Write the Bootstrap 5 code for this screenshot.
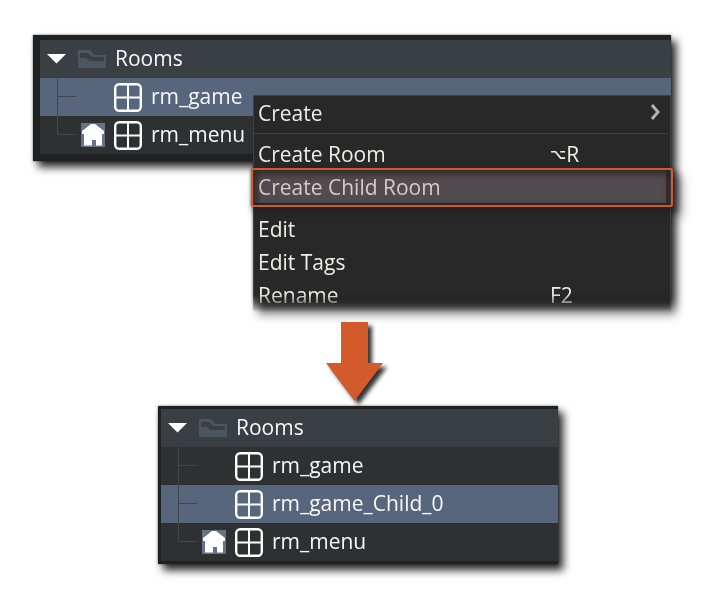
<!DOCTYPE html>
<html lang="en">
<head>
<meta charset="utf-8">
<meta name="viewport" content="width=device-width, initial-scale=1">
<title>Create Child Room</title>
<link rel="stylesheet" href="https://cdn.jsdelivr.net/npm/bootstrap@5.3.0/dist/css/bootstrap.min.css">
<style>
  body { font-family: "Open Sans", "DejaVu Sans", sans-serif; font-size: 21px; line-height: 32px; background: #fff; }
  button { font: inherit; color: inherit; background: none; border: 0; padding: 0; text-align: left; }
  .scene { padding: 35px 0 42px; }
  .raised { filter: drop-shadow(0 0 1px rgba(0,0,0,.5)) drop-shadow(5px 6px 4px rgba(0,0,0,.85)); }
  .first { margin: 0 38px 0 33px; }
  .second { margin: 4px 151px 0 158px; }
  .tree-panel { background: #2e3032; color: #f8f8f8; border: 3px solid #202122; border-right: 0; }
  .first .tree-panel { border-width: 5px 0 7px 7px; }
  .tree-row { height: 38px; width: 100%; padding-left: 17px; }
  .tree-head { background: #393f42; padding-left: 7px; }
  .node-name { padding-bottom: 2px; }
  .chosen { background: #58667d; }
  .toggle-mark { width: 19px; height: 10px; margin-right: 12px; }
  .folder { width: 28px; height: 18px; margin-right: 9px; }
  .branch { width: 19px; height: 38px; margin-right: 5px; flex: none; }
  .home-slot { width: 24px; height: 24px; margin-right: 9px; flex: none; }
  .grid-mark { width: 28px; height: 30px; margin-right: 9px; flex: none; }
  .context { top: 60px; left: 220px; right: 0; }
  .context-body { background: #282828; color: #ededeb; border: 1px solid #414141; border-bottom: 0; height: 220px; overflow: hidden;
    -webkit-mask-image: linear-gradient(#000 199px, transparent 217px); mask-image: linear-gradient(#000 199px, transparent 217px); }
  .entry { height: 33px; width: 100%; padding: 0 10px 0 4px; }
  .entry-child { background: #524b4f; color: #d8cbc5; box-shadow: inset 0 5px 5px -2px rgba(40,30,32,.5), inset 5px 0 5px -2px rgba(40,30,32,.4); border-right: 4px solid #38292a; }
  .rule { height: 1px; background: #414141; margin: 4px 3px 3px 0; }
  .rule-last { margin: 3px 3px 5px 0; }
  .keys { width: 110px; }
  .option-key { font-size: 14px; font-weight: bold; }
  .ring { top: 73px; left: -2px; right: -2px; height: 39px; border: 2px solid #d35a2a; border-radius: 2px; pointer-events: none; filter: drop-shadow(3px 4px 3px rgba(0,0,0,.6)); }
  .arrow { width: 57px; height: 80px; margin-top: 161px; overflow: visible; filter: drop-shadow(4px 4px 2px rgba(0,0,0,.8)); }
</style>
</head>
<body>
<svg class="d-none" aria-hidden="true">
  <symbol id="tri" viewBox="0 0 19 10"><path d="M0 0h19L9.500 9.500z" fill="#fff"/></symbol>
  <symbol id="fold" viewBox="0 0 28 18"><path fill-rule="evenodd" d="M0 0h12l4 5h12v13H0zM2 4v4h6l4 3h14V7H14l-4-4H2z" fill="#4b565e"/></symbol>
  <symbol id="grid" viewBox="0 0 28 30"><rect x="1.200" y="2.200" width="25.600" height="26.600" rx="4" fill="none" stroke="#fff" stroke-width="2.400"/><path d="M14 2v26M1 15.500h26" stroke="#fff" stroke-width="2"/></symbol>
  <symbol id="home" viewBox="0 0 24 24"><path d="M0 0h24v24H0z" fill="#66728c"/><path d="M10 1h4l9 7v3h-2v11.500h-6V17h-4v5.500H3V11H1V8z" fill="#fff"/></symbol>
  <symbol id="tee" viewBox="0 0 19 38"><path d="M.5 0v38M0 18.500h19" stroke="#414548" fill="none"/></symbol>
  <symbol id="ell" viewBox="0 0 19 38"><path d="M.5 0v18.500H19" stroke="#45484a" fill="none"/></symbol>
</svg>
<main class="scene d-flex flex-column">
  <section class="first raised position-relative" aria-label="Room list with menu">
    <div class="tree-panel">
      <button type="button" class="tree-row tree-head d-flex align-items-center"><svg class="toggle-mark"><use href="#tri"/></svg><svg class="folder"><use href="#fold"/></svg><span class="node-name">Rooms</span></button>
      <ul class="list-unstyled m-0">
        <li><button type="button" class="tree-row chosen d-flex align-items-center"><svg class="branch"><use href="#tee"/></svg><span class="home-slot"></span><svg class="grid-mark"><use href="#grid"/></svg><span class="node-name">rm_game</span></button></li>
        <li><button type="button" class="tree-row d-flex align-items-center"><svg class="branch"><use href="#ell"/></svg><svg class="home-slot"><use href="#home"/></svg><svg class="grid-mark"><use href="#grid"/></svg><span class="node-name">rm_menu</span></button></li>
      </ul>
    </div>
    <div class="context position-absolute">
      <div class="context-body">
        <button type="button" class="entry d-flex align-items-center justify-content-between"><span>Create</span><svg width="9" height="18" viewBox="0 0 9 18" aria-hidden="true"><path d="M1 1l6 7-6 7" fill="none" stroke="#a9b5b0" stroke-width="3"/></svg></button>
        <div class="rule"></div>
        <button type="button" class="entry d-flex align-items-center justify-content-between"><span>Create Room</span><span class="keys d-flex align-items-center"><span class="option-key">⌥</span>R</span></button>
        <button type="button" class="entry entry-child d-flex align-items-center"><span>Create Child Room</span></button>
        <div class="rule rule-last"></div>
        <button type="button" class="entry d-flex align-items-center"><span>Edit</span></button>
        <button type="button" class="entry d-flex align-items-center"><span>Edit Tags</span></button>
        <button type="button" class="entry d-flex align-items-center justify-content-between"><span>Rename</span><span class="keys">F2</span></button>
      </div>
      <div class="ring position-absolute"></div>
    </div>
  </section>
  <svg class="arrow align-self-center" viewBox="0 0 57 80" aria-hidden="true"><path d="M15 0h27v41h15L28.500 79 0 41h15z" fill="#d35a2a"/></svg>
  <section class="second raised" aria-label="Resulting room list">
    <div class="tree-panel">
      <button type="button" class="tree-row tree-head d-flex align-items-center"><svg class="toggle-mark"><use href="#tri"/></svg><svg class="folder"><use href="#fold"/></svg><span class="node-name">Rooms</span></button>
      <ul class="list-unstyled m-0">
        <li><button type="button" class="tree-row d-flex align-items-center"><svg class="branch"><use href="#tee"/></svg><span class="home-slot"></span><svg class="grid-mark"><use href="#grid"/></svg><span class="node-name">rm_game</span></button></li>
        <li><button type="button" class="tree-row chosen d-flex align-items-center"><svg class="branch"><use href="#tee"/></svg><span class="home-slot"></span><svg class="grid-mark"><use href="#grid"/></svg><span class="node-name">rm_game_Child_0</span></button></li>
        <li><button type="button" class="tree-row d-flex align-items-center"><svg class="branch"><use href="#ell"/></svg><svg class="home-slot"><use href="#home"/></svg><svg class="grid-mark"><use href="#grid"/></svg><span class="node-name">rm_menu</span></button></li>
      </ul>
    </div>
  </section>
</main>
<script src="https://cdn.jsdelivr.net/npm/bootstrap@5.3.0/dist/js/bootstrap.bundle.min.js"></script>
</body>
</html>
